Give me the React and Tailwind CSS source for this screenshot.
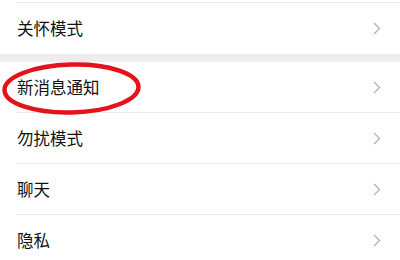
const rows = ["勿扰模式", "聊天", "隐私"];

const Chevron = () => (
  <svg width="8" height="13" viewBox="0 0 8 13" className="mr-[19px]">
    <polyline
      points="1,1 6.5,6.5 1,12"
      fill="none"
      stroke="#b4b4b4"
      strokeWidth="1.4"
    />
  </svg>
);

const Row = ({ label, height = "h-[50px]", children }) => (
  <div className={`relative flex items-center justify-between ${height} pl-[17px]`}>
    <span className="text-[16.5px] text-[#111]">{label}</span>
    <Chevron />
    {children}
  </div>
);

const Divider = () => (
  <div className="ml-4 h-px bg-[#ececec]" />
);

export default function App() {
  return (
    <div
      className="w-[400px] h-[260px] overflow-hidden bg-white"
      style={{ fontFamily: '"Noto Sans CJK SC", "Noto Sans", sans-serif' }}
    >
      <div className="h-[2px]" />
      <Divider />
      <Row label="关怀模式" height="h-[51px]" />
      <div className="h-2 bg-[#ededed]" />
      <Row label="新消息通知">
        {/* red hand-drawn circle over the row */}
        <svg
          className="absolute left-0 top-0"
          width="144"
          height="56"
          viewBox="0 0 144 56"
        >
          <ellipse
            cx="71.5"
            cy="26.5"
            rx="67"
            ry="24"
            fill="none"
            stroke="#e3121b"
            strokeWidth="4.5"
            transform="rotate(-1.5 71.5 26.5)"
          />
        </svg>
      </Row>
      {rows.map((label) => (
        <div key={label}>
          <Divider />
          <Row label={label} />
        </div>
      ))}
    </div>
  );
}
